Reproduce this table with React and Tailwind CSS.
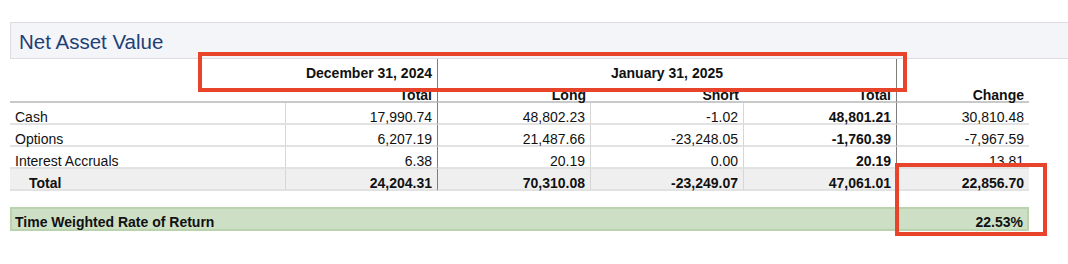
import React from "react";

const cols = "grid grid-cols-[276px_152px_153px_153px_153px_132px]";

const rows = [
    { label: "Cash", dec: "17,990.74", long: "48,802.23", short: "-1.02", total: "48,801.21", change: "30,810.48" },
    { label: "Options", dec: "6,207.19", long: "21,487.66", short: "-23,248.05", total: "-1,760.39", change: "-7,967.59" },
    { label: "Interest Accruals", dec: "6.38", long: "20.19", short: "0.00", total: "20.19", change: "13.81" },
];

function Row({ r, isTotal }) {
    const base = "h-[22px] flex items-center justify-end pr-[5px] pt-[8px] border-b-2 border-[#e2e2e2]";
    const bold = isTotal ? "font-bold" : "";
    return (
        <div className={`${cols} ${isTotal ? "bg-[#efefef]" : ""}`}>
            <div className={`h-[22px] flex items-center pt-[8px] border-b-2 border-[#e2e2e2] border-r border-r-[#d6d6d6] ${isTotal ? "pl-[19px] font-bold" : "pl-[5px]"}`}>
                {r.label}
            </div>
            <div className={`${base} ${bold} border-r border-r-[#7d7d7d]`}>{r.dec}</div>
            <div className={`${base} ${bold} border-r border-r-[#d6d6d6]`}>{r.long}</div>
            <div className={`${base} ${bold} border-r border-r-[#d6d6d6]`}>{r.short}</div>
            <div className={`${base} font-bold border-r ${isTotal ? "border-r-[#d6d6d6]" : "border-r-[#7d7d7d]"}`}>{r.total}</div>
            <div className={`${base} ${bold}`}>{r.change}</div>
        </div>
    );
}

export default function App() {
    return (
        <div className="relative w-[1068px] h-[264px] bg-white pt-[22px] pl-[10px] text-[14px] text-[#111] font-['Liberation_Sans',Arial,sans-serif]">
            {/* Section title bar */}
            <div className="h-[37px] border-y border-l border-[#dcdde0] bg-[#f3f5f8] flex items-center pl-[8px]">
                <h2 className="text-[20.5px] text-[#1f4076] leading-none pt-[4px]">Net Asset Value</h2>
            </div>

            <div className="w-[1019px]">
                {/* Date header row */}
                <div className={`${cols} h-[27px]`}>
                    <div className="col-span-2 flex items-center justify-end pr-[5px] pt-[2px] font-bold border-r border-r-[#7d7d7d]">
                        December 31, 2024
                    </div>
                    <div className="col-span-3 flex items-center justify-center pt-[2px] font-bold border-r border-r-[#7d7d7d]">
                        January 31, 2025
                    </div>
                    <div />
                </div>
                {/* Column headers */}
                <div className={`${cols} h-[17px] font-bold`}>
                    <div className="border-b-2 border-[#c9c9c9]" />
                    <div className="flex items-end justify-end pr-[5px] border-b-2 border-[#c9c9c9] border-r border-r-[#7d7d7d] leading-[11px]">Total</div>
                    <div className="flex items-end justify-end pr-[5px] border-b-2 border-[#c9c9c9] leading-[11px]">Long</div>
                    <div className="flex items-end justify-end pr-[5px] border-b-2 border-[#c9c9c9] leading-[11px]">Short</div>
                    <div className="flex items-end justify-end pr-[5px] border-b-2 border-[#c9c9c9] border-r border-r-[#7d7d7d] leading-[11px]">Total</div>
                    <div className="flex items-end justify-end pr-[5px] border-b-2 border-[#c9c9c9] leading-[11px]">Change</div>
                </div>

                {rows.map((r) => (
                    <Row key={r.label} r={r} />
                ))}
                <Row
                    isTotal
                    r={{ label: "Total", dec: "24,204.31", long: "70,310.08", short: "-23,249.07", total: "47,061.01", change: "22,856.70" }}
                />

                {/* Rate of return */}
                <div className="mt-[16px] h-[24px] border-2 border-[#b9d3ad] bg-[#cde0c5] flex items-center justify-between px-[3px] pt-[7px] font-bold">
                    <span>Time Weighted Rate of Return</span>
                    <span className="pr-[1px]">22.53%</span>
                </div>
            </div>

            {/* Annotation boxes */}
            <div className="absolute left-[198px] top-[52px] w-[709px] h-[40px] border-4 border-[#e8432b]" />
            <div className="absolute left-[895px] top-[163px] w-[152px] h-[73px] border-4 border-[#e8432b]" />
        </div>
    );
}
